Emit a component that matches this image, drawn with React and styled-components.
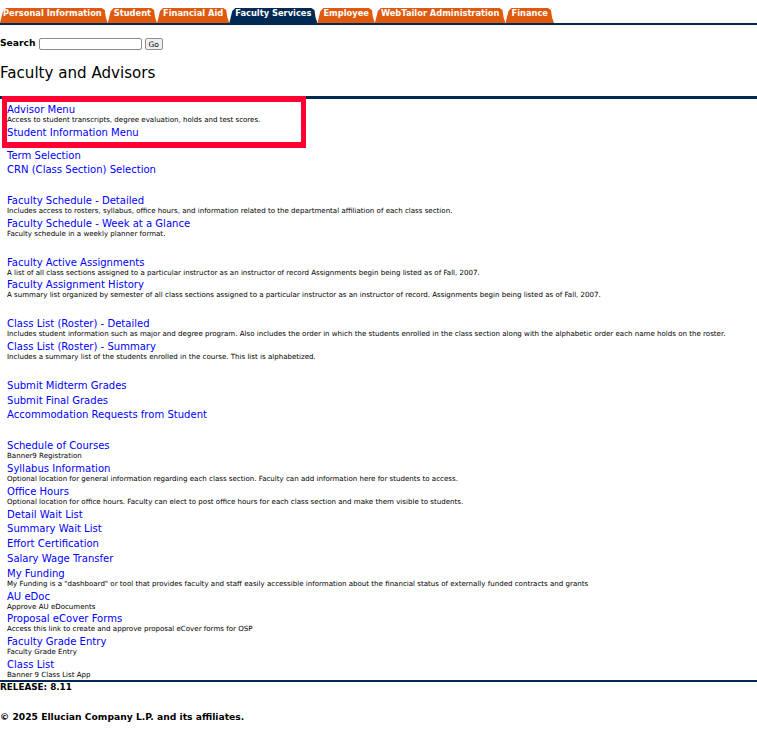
import React from 'react';
import styled, { createGlobalStyle } from 'styled-components';

const Global = createGlobalStyle`
  html, body { margin: 0; padding: 0; background: #fff; }
  body { font-family: "DejaVu Sans", Verdana, sans-serif; color: #000; }
`;

const Page = styled.div`
  position: relative;
  width: 757px;
  height: 748px;
  overflow: hidden;
`;

const TabBar = styled.nav`
  display: flex;
  align-items: flex-end;
  height: 15px;
  padding-top: 8px;
  border-bottom: 2px solid #002a52;
`;

const Tab = styled.a`
  height: 15px;
  padding: 0 6px;
  background: ${(p) => (p.$active ? '#002a52' : '#e05a0e')};
  color: #fff;
  font-size: 8.3px;
  font-weight: bold;
  line-height: 11px;
  white-space: nowrap;
  clip-path: polygon(0 100%, 3px 3px, 6px 0, calc(100% - 6px) 0, calc(100% - 3px) 2px, calc(100% - 2px) 60%, 100% 100%);
  &:first-child {
    padding-left: 3px;
  }
`;

const Search = styled.form`
  display: flex;
  align-items: center;
  height: 20px;
  margin-top: 8px;
  font-size: 9.2px;
  font-weight: bold;
`;

const SearchLabel = styled.label`
  margin-bottom: 2px;
`;

const SearchInput = styled.input`
  width: 101px;
  height: 10px;
  padding: 0;
  margin: 2px 3px 0 3px;
  border: 1px solid #8b8b8f;
  border-radius: 2px;
`;

const GoButton = styled.button`
  width: 16px;
  height: 10px;
  margin-top: 2px;
  padding: 0;
  box-sizing: content-box;
  border: 1px solid #8f8f94;
  border-radius: 2px;
  background: #efefef;
  color: #000;
  font: 7.5px "DejaVu Sans", sans-serif;
`;

const Title = styled.h2`
  margin: 10px 0 0;
  font-size: 15.1px;
  font-weight: normal;
  line-height: 20px;
`;

const Rule = styled.div`
  height: 3px;
  margin-top: 13px;
  background: #002a52;
`;

const Menu = styled.div`
  padding: 3.95px 0 0 7px;
`;

const Group = styled.div`
  margin-top: ${(p) => p.$gap || 0}px;
`;

const Entry = styled.div`
  height: ${(p) => (p.$desc ? 22.8 : 14.6)}px;
`;

const MenuLink = styled.a`
  display: block;
  color: #0000ff;
  font-size: 10.05px;
  line-height: 14px;
`;

const Desc = styled.div`
  margin-top: -1px;
  color: #000;
  font-size: 7.07px;
  line-height: 7px;
  white-space: nowrap;
`;

const Footer = styled.footer`
  margin-top: -1px;
  border-top: 2px solid #002a52;
  font-size: 9.2px;
  font-weight: bold;
  line-height: 11px;
`;

const Release = styled.div`
  font-size: 8.8px;
`;

const Copyright = styled.div`
  margin-top: 18px;
`;

const Highlight = styled.div`
  position: absolute;
  left: 2px;
  top: 96px;
  width: 294px;
  height: 40px;
  border: 5px solid #ff0033;
  border-top-width: 6px;
  border-bottom-width: 6px;
`;

const tabs = ['Personal Information', 'Student', 'Financial Aid', 'Faculty Services', 'Employee', 'WebTailor Administration', 'Finance'];

const groups = [
  { gap: 0, items: [
    ['Advisor Menu', 'Access to student transcripts, degree evaluation, holds and test scores.'],
    ['Student Information Menu'],
  ] },
  { gap: 8.4, items: [['Term Selection'], ['CRN (Class Section) Selection']] },
  { gap: 16.4, items: [
    ['Faculty Schedule - Detailed', 'Includes access to rosters, syllabus, office hours, and information related to the departmental affiliation of each class section.'],
    ['Faculty Schedule - Week at a Glance', 'Faculty schedule in a weekly planner format.'],
  ] },
  { gap: 15.8, items: [
    ['Faculty Active Assignments', 'A list of all class sections assigned to a particular instructor as an instructor of record Assignments begin being listed as of Fall, 2007.'],
    ['Faculty Assignment History', 'A summary list organized by semester of all class sections assigned to a particular instructor as an instructor of record. Assignments begin being listed as of Fall, 2007.'],
  ] },
  { gap: 16.2, items: [
    ['Class List (Roster) - Detailed', 'Includes student information such as major and degree program. Also includes the order in which the students enrolled in the class section along with the alphabetic order each name holds on the roster.'],
    ['Class List (Roster) - Summary', 'Includes a summary list of the students enrolled in the course. This list is alphabetized.'],
  ] },
  { gap: 16.2, items: [['Submit Midterm Grades'], ['Submit Final Grades'], ['Accommodation Requests from Student']] },
  { gap: 16.4, items: [
    ['Schedule of Courses', 'Banner9 Registration'],
    ['Syllabus Information', 'Optional location for general information regarding each class section. Faculty can add information here for students to access.'],
    ['Office Hours', 'Optional location for office hours. Faculty can elect to post office hours for each class section and make them visible to students.'],
    ['Detail Wait List'],
    ['Summary Wait List'],
    ['Effort Certification'],
    ['Salary Wage Transfer'],
  ] },
  { gap: 0.6, items: [
    ['My Funding', 'My Funding is a "dashboard" or tool that provides faculty and staff easily accessible information about the financial status of externally funded contracts and grants'],
    ['AU eDoc', 'Approve AU eDocuments'],
    ['Proposal eCover Forms', 'Access this link to create and approve proposal eCover forms for OSP'],
    ['Faculty Grade Entry', 'Faculty Grade Entry'],
    ['Class List', 'Banner 9 Class List App'],
  ] },
];

export default function App() {
  return (
    <Page>
      <Global />
      <TabBar>
        {tabs.map((t) => <Tab key={t} $active={t === 'Faculty Services'}>{t}</Tab>)}
      </TabBar>
      <Search onSubmit={(e) => e.preventDefault()}>
        <SearchLabel>Search</SearchLabel>
        <SearchInput type="text" />
        <GoButton>Go</GoButton>
      </Search>
      <Title>Faculty and Advisors</Title>
      <Rule />
      <Menu>
        {groups.map((g, i) => (
          <Group key={i} $gap={g.gap}>
            {g.items.map(([name, desc]) => (
              <Entry key={name} $desc={!!desc}>
                <MenuLink>{name}</MenuLink>
                {desc && <Desc>{desc}</Desc>}
              </Entry>
            ))}
          </Group>
        ))}
      </Menu>
      <Footer>
        <Release>RELEASE: 8.11</Release>
        <Copyright>© 2025 Ellucian Company L.P. and its affiliates.</Copyright>
      </Footer>
      <Highlight />
    </Page>
  );
}
